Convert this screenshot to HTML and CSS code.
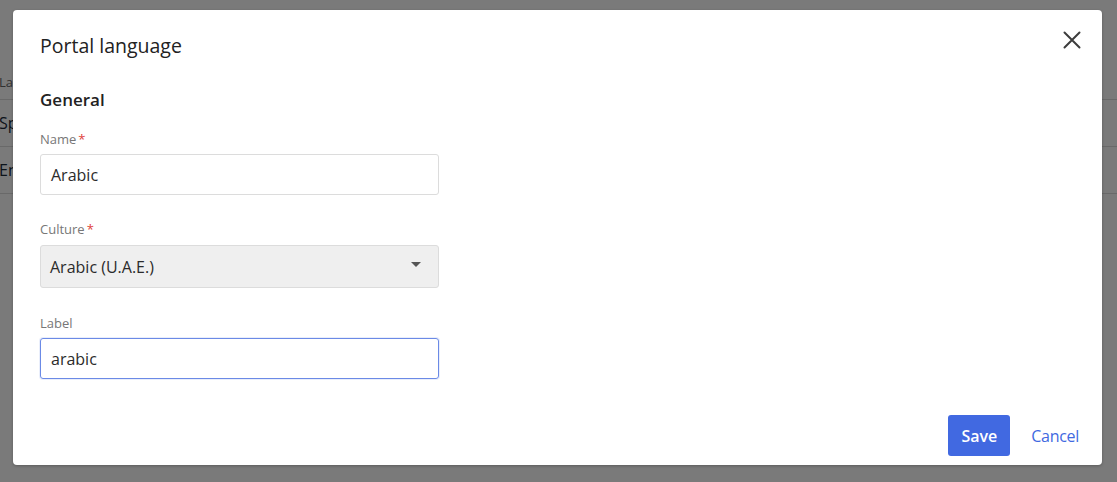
FILE: index.html
```html
<!DOCTYPE html>
<html>
<head>
<meta charset="utf-8">
<link rel="stylesheet" href="styles.css">
</head>
<body>
<div class="page">
  <div class="row head">Language</div>
  <div class="row">Spanish</div>
  <div class="row">English</div>
</div>
<div class="overlay">
  <div class="dialog">
    <div class="dialog-head">
      <h1 class="title">Portal language</h1>
      <button class="close" aria-label="Close">
        <svg width="18" height="18" viewBox="0 0 18 18"><path d="M1.5 1.5 L16.5 16.5 M16.5 1.5 L1.5 16.5" stroke="#3d3d3d" stroke-width="2" stroke-linecap="round" fill="none"/></svg>
      </button>
    </div>
    <div class="dialog-body">
      <h2 class="section">General</h2>
      <div class="field">
        <label class="lbl">Name<span class="req">*</span></label>
        <div class="input">Arabic</div>
      </div>
      <div class="field">
        <label class="lbl">Culture<span class="req">*</span></label>
        <div class="input select">Arabic (U.A.E.)<span class="caret"></span></div>
      </div>
      <div class="field last">
        <label class="lbl">Label</label>
        <div class="input focus">arabic</div>
      </div>
    </div>
    <div class="dialog-foot">
      <button class="btn save">Save</button>
      <button class="btn cancel">Cancel</button>
    </div>
  </div>
</div>
</body>
</html>
```
FILE: styles.css
```css
* { box-sizing: border-box; }
html, body { margin: 0; padding: 0; }
body {
  width: 1117px;
  height: 482px;
  overflow: hidden;
  background: #fff;
  font-family: "Open Sans", "Noto Sans", sans-serif;
  position: relative;
}
.page {
  padding-top: 64px;
  color: #1b2a3a;
}
.row {
  height: 47px;
  line-height: 47px;
  font-size: 16px;
  border-bottom: 1px solid #dcdcdc;
  margin-left: -1px;
}
.row.head {
  height: 36px;
  line-height: 36px;
  font-size: 13px;
  color: #666;
}
.overlay {
  position: absolute;
  inset: 0;
  background: rgba(0,0,0,0.52);
  padding: 10px 15px 17px 13px;
  display: flex;
}
.dialog {
  flex: 1;
  background: #fff;
  border-radius: 4px;
  display: flex;
  flex-direction: column;
  box-shadow: 0 1px 3px rgba(0,0,0,0.25);
}
.dialog-head {
  display: flex;
  justify-content: space-between;
  align-items: flex-start;
  padding: 22px 19px 0 27px;
}
.title {
  margin: 0;
  font-size: 19.5px;
  font-weight: 500;
  color: #222;
  line-height: 28px;
}
.close {
  border: 0;
  background: none;
  padding: 0;
  margin-top: -3px;
  width: 22px;
  height: 22px;
  display: flex;
  align-items: center;
  justify-content: center;
  cursor: pointer;
}
.dialog-body {
  padding: 0 27px;
  flex: 1;
}
.section {
  margin: 28px 0 0;
  font-size: 17px;
  font-weight: 600;
  color: #222;
  line-height: 24px;
}
.field {
  width: 399px;
  margin-top: 18px;
}
.field + .field { margin-top: 25px; }
.field.last { margin-top: 26px; }
.lbl {
  display: block;
  font-size: 13px;
  color: #777;
  line-height: 18px;
  margin-bottom: 6px;
}
.req {
  color: #e0413a;
  margin-left: 2px;
}
.input {
  height: 41px;
  border: 1px solid #dcdcdc;
  border-radius: 3px;
  padding: 0 10px;
  font-size: 16px;
  color: #2b2b2b;
  display: flex;
  align-items: center;
}
.select {
  height: 43px;
  margin-top: 7px;
  background: #efefef;
  padding-left: 9px;
  justify-content: space-between;
}
.caret {
  width: 0;
  height: 0;
  border-left: 5px solid transparent;
  border-right: 5px solid transparent;
  border-top: 5px solid #555;
  margin-right: 7px;
  margin-top: -4px;
}
.focus {
  border-color: #6b8ae6;
  box-shadow: 0 0 0 1px rgba(107,138,230,0.15);
}
.dialog-foot {
  display: flex;
  justify-content: flex-end;
  align-items: center;
  gap: 21px;
  padding: 0 23px 9px 0;
}
.btn {
  font-family: inherit;
  font-size: 16px;
  border: 0;
  cursor: pointer;
}
.save {
  background: #4169e1;
  color: #fff;
  font-weight: 600;
  height: 41px;
  padding: 0 13px;
  border-radius: 3px;
}
.cancel {
  background: none;
  color: #4169e1;
  padding: 0;
  font-weight: 500;
  letter-spacing: -0.3px;
}
```
